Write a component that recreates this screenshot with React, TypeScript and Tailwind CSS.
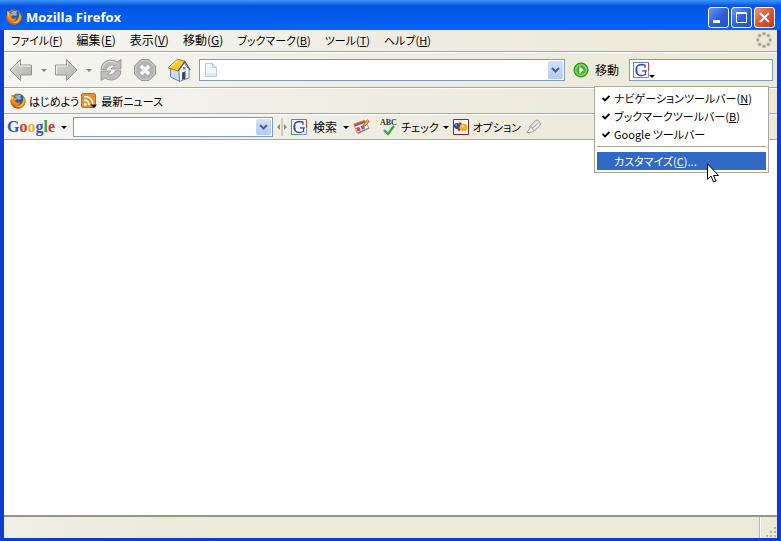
import { useState } from "react";
import type { ReactNode } from "react";

interface MenuLabel {
  text: string;
  accessKey: string;
  size: string;
}

// kanji labels are set one step larger than the compact kana ones
const MENUS: MenuLabel[] = [
  { text: "ファイル", accessKey: "F", size: "text-[11px]" },
  { text: "編集", accessKey: "E", size: "text-xs" },
  { text: "表示", accessKey: "V", size: "text-xs" },
  { text: "移動", accessKey: "G", size: "text-xs" },
  { text: "ブックマーク", accessKey: "B", size: "text-[11px]" },
  { text: "ツール", accessKey: "T", size: "text-[11px]" },
  { text: "ヘルプ", accessKey: "H", size: "text-[11px]" },
];

const TOOLBARS = [
  { id: "nav", text: "ナビゲーションツールバー", accessKey: "N" },
  { id: "bookmarks", text: "ブックマークツールバー", accessKey: "B" },
  { id: "google", text: "Google ツールバー", accessKey: "" },
];

const AccessKey = ({ letter }: { letter: string }) => (
  <>
    (<u className="underline-offset-1">{letter}</u>)
  </>
);

const Caret = ({ className = "text-black" }: { className?: string }) => (
  <svg viewBox="0 0 6 3" className={`h-[3px] w-[6px] shrink-0 ${className}`}>
    <path d="M0 0h6L3 3z" fill="currentColor" />
  </svg>
);

const FirefoxIcon = () => (
  <svg viewBox="0 0 16 16" className="h-4 w-4 shrink-0">
    <circle cx="8" cy="8" r="7.5" fill="#e8751a" />
    <path d="M2 4 1 1.5 4.5 3Q8 .2 12 2.2 16 5 15.5 9.5 14 15 8.5 15.7 2.5 15.5.6 10 .2 6.500 2 4z" fill="#e36a12" />
    <circle cx="8.600" cy="6.200" r="5.300" fill="#2c5c9c" />
    <path d="M5 3.200Q8 .8 11.500 2.400L10 4l1.500 1.500L9 7 6.500 5.500z" fill="#7db4df" />
    <path d="M13.200 3.500Q16.500 8.500 13 12.500 9 15.800 5 13.200 9.500 14 11.800 10.500 13.800 7.500 13.200 3.500z" fill="#f9ae2b" />
    <path d="M1.500 2 3.600 4.200 6.500 4.800 7.200 6.600 5 7.800Q5.200 10 8.200 9.800L10.500 9Q9.500 12.300 5.800 12 1.800 11 1.200 6.800z" fill="#f38a1c" />
    <path d="M1.500 2 3.200 4.600 2.200 8 1.500 6z" fill="#fbd04a" />
    <path d="M2 11.500Q5 15.200 10 14.800 5.500 16.800 2 11.500z" fill="#a83208" />
  </svg>
);

const ArrowIcon = ({ flip = false }: { flip?: boolean }) => (
  <svg viewBox="0 0 24 24" className="h-6 w-6">
    <defs>
      <linearGradient id="arrowFill" x1="0" y1="0" x2="1" y2="1">
        <stop offset="0" stopColor="#dcdcda" />
        <stop offset="1" stopColor="#aeaeac" />
      </linearGradient>
    </defs>
    <path
      d={flip ? "M23 12 12.500 1.500V7H1.500v10h11v5.500z" : "M1 12 11.500 1.500V7h11v10h-11v5.500z"}
      fill="url(#arrowFill)"
      stroke="#959593"
      strokeLinejoin="round"
    />
    <path
      d={flip ? "M2.500 16V8h11V4" : "M2.500 12 10.500 4v4h11"}
      fill="none"
      stroke="#ecece9"
    />
  </svg>
);

const ReloadIcon = () => (
  <svg viewBox="0 0 24 24" className="h-6 w-6">
    <g fill="#bdbdbb" stroke="#969694" strokeWidth=".9" strokeLinejoin="round">
      <path d="M2 11.500Q2.500 3 11 2q4.500-.3 7 2l4-2.500v9.500h-10l3.500-3Q13 6 10.500 7.500 8 9 7.500 11.500z" />
      <path d="M22 12.800Q21.500 21 13 22q-4.500.3-7-2l-4 2.500V13h10l-3.500 3q2.500 2 5 .5 2.500-1.500 3-3.700z" />
    </g>
    <path d="M3.500 10.500Q4.500 4 11 3.300q4-.2 6.500 2" fill="none" stroke="#dededc" />
  </svg>
);

const StopIcon = () => (
  <svg viewBox="0 0 24 24" className="h-6 w-6">
    <path d="M8 1.500h8L22.500 8v8L16 22.500H8L1.500 16V8z" fill="#b4b4b2" stroke="#969694" />
    <path d="M8.500 2.700h7L21.300 8.500v7l-5.800 5.800h-7l-5.800-5.800v-7z" fill="none" stroke="#cfcfcd" />
    <path d="m8 8 8 8m0-8-8 8" stroke="#fff" strokeWidth="3.400" />
  </svg>
);

const HomeIcon = () => (
  <svg viewBox="0 0 24 24" className="h-6 w-6">
    <path d="M3.500 10v9l9 4.300V12z" fill="#cfdaec" stroke="#7085ab" />
    <path d="M12 12.500 17 5l5 6.500V20l-9.500 3.300z" fill="#fafbfe" stroke="#7085ab" />
    <path d="M15 14.500 18.500 13.300v7.400L15 22z" fill="#3b4a68" />
    <path d="M16 9h2.500v2.500H16z" fill="#6f86b3" />
    <path d="M10.500 1.200 18 3.300 11 13 1 9.800z" fill="#f4cb35" stroke="#a27b17" strokeLinejoin="round" />
    <path d="M10.800 2.500 3.200 9" stroke="#ffec9b" strokeWidth="1.200" />
    <path d="m11 13 6.800-9.500 5.500 8.500" fill="none" stroke="#4d5566" strokeWidth="1.200" />
  </svg>
);

const PageIcon = () => (
  <svg viewBox="0 0 12 14" className="h-[14px] w-3">
    <path d="M.5.5h7l4 4v9H.5z" fill="#f4f8fe" stroke="#b9c9e6" />
    <path d="M2 10h9v3H2z" fill="#dce7f8" />
    <path d="M7.500.5v4h4" fill="#dce6f6" stroke="#b9c9e6" />
  </svg>
);

const GoIcon = () => (
  <svg viewBox="0 0 16 16" className="h-4 w-4">
    <circle cx="8" cy="8" r="7" fill="#47b52b" stroke="#278613" />
    <circle cx="8" cy="8" r="5.300" fill="none" stroke="#83dc62" strokeWidth="1.500" />
    <path d="M6 3.800 11.500 8 6 12.200z" fill="#fff" stroke="#2f981b" strokeWidth=".6" />
  </svg>
);

const GoogleG = () => (
  <svg viewBox="0 0 16 16" className="h-4 w-4 shrink-0">
    <path d="M0 0h16v16H0z" fill="#fff" />
    <path d="M.5 15.500V.5h15" fill="none" stroke="#5f7fd6" />
    <path d="M15.500.5v9" stroke="#c9453b" />
    <path d="M.5 5v10.500H10" fill="none" stroke="#4da557" />
    <path d="M10 15.500h5.500v-6" fill="none" stroke="#8797cf" />
    <path
      d="M12 5.800V3.200Q10 2.500 8.500 2.500 3 2.800 3 8t5.500 5.500q2 0 4-1V9h1M9 8.900h4.800"
      fill="none"
      stroke="#2c49b8"
      strokeWidth="1.300"
    />
    <path d="M4 5.500Q3 8 4.200 11" fill="none" stroke="#2c49b8" strokeWidth="1.300" />
  </svg>
);

const FeedIcon = () => (
  <svg viewBox="0 0 16 16" className="h-4 w-4">
    <rect x=".5" y=".5" width="14" height="14" rx="1.500" fill="#f08a24" stroke="#cf6c13" />
    <circle cx="4.200" cy="11.200" r="1.500" fill="#fff" />
    <path d="M3 7.200q5 0 5 5M3 3.500q9 0 9 9" fill="none" stroke="#fff" strokeWidth="1.700" />
    <path d="M9.500 11.500H16L12.800 15z" fill="#111" />
  </svg>
);

const HighlightIcon = () => (
  <svg viewBox="0 0 17 16" className="h-4 w-[17px]">
    <path d="m1 6 11-4 4.500 7.500L5 15z" fill="#77726c" />
    <path d="m.8 5 11-3.800 4 7.800L4 13.800z" fill="#fbf4ec" stroke="#a58d80" strokeWidth=".8" />
    <path d="m1 5.200 10.500-3.700 1 2.300L2 7.500z" fill="#d8432f" />
    <path d="m3 9 3.300-1.200 1.500 3.500-3.300 1.200z" fill="#cf4a37" />
    <path d="m7.500 7.300 3-1 1.500 3.200-3 1.200z" fill="#5a76b8" />
    <path d="m14.500.8-3.500 4-.7 3 2.500-1.500 3.500-4z" fill="#f2b93a" stroke="#a0552a" strokeWidth=".8" />
  </svg>
);

const CheckIcon = () => (
  <svg viewBox="0 0 17 17" className="h-[17px] w-[17px]">
    <text x="0" y="6" className="font-['Liberation_Serif',serif] text-[8px] font-bold" fill="#333">
      ABC
    </text>
    <path d="m4 11 4 4 6-8" fill="none" stroke="#35a94a" strokeWidth="2.400" />
  </svg>
);

const OptionsIcon = () => (
  <svg viewBox="0 0 16 16" className="h-4 w-4">
    <path d="M.5.5h15v15H.5z" fill="#fff" stroke="#9c1c24" />
    <circle cx="4" cy="7" r="3" fill="#274f9f" />
    <circle cx="7" cy="5" r="1.800" fill="#cf342a" />
    <circle cx="10.800" cy="8.500" r="3.700" fill="#eab21f" />
    <circle cx="9.800" cy="7.200" r="1.300" fill="#fbe584" />
    <circle cx="6" cy="10.500" r="1.500" fill="#c73127" />
    <circle cx="3.300" cy="6" r=".9" fill="#86aadf" />
  </svg>
);

const PenIcon = () => (
  <svg viewBox="0 0 17 16" className="h-4 w-[17px]">
    <path d="M10.500 1.500 12.500.8l3.200 3.500-.5 1.900L9.500 12 5 7.500z" fill="#dddbd3" stroke="#a5a39b" />
    <path d="m11.500 3.500-4.500 4.500M13.500 5.200 9 9.800" stroke="#fff" />
    <path d="m12.500 4.300-4.500 4.500" stroke="#a5a39b" />
    <path d="M5 7.500 4.500 10l-3 3.500h5l1-1.300 2-.2z" fill="#f5f4ee" stroke="#a5a39b" />
  </svg>
);

const Throbber = () => (
  <svg viewBox="0 0 16 16" className="h-4 w-4" fill="#aaa8a1">
    <circle cx="8" cy="1.800" r="1.800" />
    <circle cx="12.400" cy="3.600" r="1.800" />
    <circle cx="14.200" cy="8" r="1.800" />
    <circle cx="12.400" cy="12.400" r="1.800" />
    <circle cx="8" cy="14.200" r="1.800" />
    <circle cx="3.600" cy="12.400" r="1.800" />
    <circle cx="1.800" cy="8" r="1.800" />
    <circle cx="3.600" cy="3.600" r="1.800" />
  </svg>
);

const DropButton = ({ label }: { label: string }) => (
  <button
    aria-label={label}
    className="flex w-[15px] shrink-0 items-center justify-center self-stretch rounded-xs bg-gradient-to-b from-[#d3e0fd] to-[#b4c9f6]"
  >
    <svg viewBox="0 0 9 6" className="h-[6px] w-[9px]">
      <path d="m1 1 3.500 3.500L8 1" fill="none" stroke="#4d6185" strokeWidth="2" />
    </svg>
  </button>
);

const CaptionButton = ({ label, close = false, children }: { label: string; close?: boolean; children: ReactNode }) => (
  <button
    aria-label={label}
    className={`h-[21px] w-[21px] rounded-[3px] border border-white bg-gradient-to-br ${
      close ? "from-[#ee9272] via-[#dc5630] to-[#c03a12]" : "from-[#7297ee] via-[#2f61dc] to-[#2150cc]"
    }`}
  >
    <svg viewBox="0 0 19 19" className="h-[19px] w-[19px]" fill="none" stroke="#fff">
      {children}
    </svg>
  </button>
);

const ToolbarMenu = () => {
  const [visible, setVisible] = useState(["nav", "bookmarks", "google"]);

  const toggle = (id: string) =>
    setVisible(visible.includes(id) ? visible.filter((v) => v !== id) : [...visible, id]);

  return (
    <div
      role="menu"
      className="absolute top-[86px] right-3 z-10 w-[175px] border border-[#aca899] bg-white p-[2px]"
    >
      {TOOLBARS.map((bar) => (
        <button
          key={bar.id}
          role="menuitemcheckbox"
          aria-checked={visible.includes(bar.id)}
          onClick={() => toggle(bar.id)}
          className="flex h-[18px] w-full items-center"
        >
          <span className="flex w-[17px] shrink-0 justify-center">
            {visible.includes(bar.id) && (
              <svg viewBox="0 0 8 7" className="h-[7px] w-2">
                <path d="M.5 3 3 5.500 7.500 1" fill="none" stroke="#000" strokeWidth="1.900" />
              </svg>
            )}
          </span>
          <span>
            {bar.text}
            {bar.accessKey && <AccessKey letter={bar.accessKey} />}
          </span>
        </button>
      ))}
      <hr className="mt-[3px] mb-[5px] border-[#aca899]" />
      <button
        role="menuitem"
        className="flex h-[18px] w-full items-center bg-[#316ac5] pl-[17px] text-white"
      >
        <span>
          カスタマイズ
          <AccessKey letter="C" />
          ...
        </span>
      </button>
      <svg viewBox="0 0 12 20" className="pointer-events-none absolute top-[76px] left-[112px] h-5 w-3">
        <path d="M.5.8v15.500L4 13l2.500 6 2.500-1-2.500-5.500h5z" fill="#fff" stroke="#000" />
      </svg>
    </div>
  );
};

export default function App() {
  const [address, setAddress] = useState("");
  const [search, setSearch] = useState("");
  const [query, setQuery] = useState("");

  return (
    <div className="relative flex min-h-screen flex-col bg-[#0842d6] font-['Noto_Sans_CJK_JP',sans-serif] text-[11px] leading-4 whitespace-nowrap text-black [font-feature-settings:'palt']">
      {/* Title bar */}
      <header className="flex h-[30px] items-center gap-1 bg-gradient-to-b from-[#3d95ff] via-[#0453e0] via-20% to-[#0465fa] pt-1 pr-[6px] pl-[6px]">
        <FirefoxIcon />
        <h1 className="grow font-['Open_Sans',sans-serif] text-[13px] font-bold text-white">
          Mozilla Firefox
        </h1>
        <div className="flex gap-[2px]">
          <CaptionButton label="最小化">
            <path d="M4 13.500h7" strokeWidth="3" />
          </CaptionButton>
          <CaptionButton label="最大化">
            <path d="M4.500 4.500h10v10h-10zM4 5.500h11" />
          </CaptionButton>
          <CaptionButton label="閉じる" close>
            <path d="m5 5 9 9m0-9-9 9" strokeWidth="2" />
          </CaptionButton>
        </div>
      </header>

      <div className="flex grow flex-col border-x-4 border-b-[3px] border-[#0c3cd0]">
        <div className="bg-gradient-to-r from-[#f5f5f2] via-[#efede2] via-50% to-[#ece9d8]">
          {/* Menu bar */}
          <nav className="flex h-[22px] items-center border-b border-[#aca899] pr-[5px] pb-px pl-[7px]">
            <div className="flex grow items-baseline gap-[14px]">
              {MENUS.map((menu) => (
                <button key={menu.text} className={`leading-4 ${menu.size}`}>
                  {menu.text}
                  <AccessKey letter={menu.accessKey} />
                </button>
              ))}
            </div>
            <Throbber />
          </nav>

          {/* Navigation toolbar */}
          <div className="flex h-9 items-center border-t border-b border-t-white border-b-[#aca899] pr-1 pl-[5px]">
            <button aria-label="戻る"><ArrowIcon /></button>
            <button aria-label="戻る履歴" className="flex w-[21px] justify-center"><Caret className="text-[#85847d]" /></button>
            <button aria-label="進む"><ArrowIcon flip /></button>
            <button aria-label="進む履歴" className="flex w-[21px] justify-center"><Caret className="text-[#85847d]" /></button>
            <div className="flex gap-[10px]">
              <button aria-label="更新"><ReloadIcon /></button>
              <button aria-label="中止"><StopIcon /></button>
              <button aria-label="ホーム"><HomeIcon /></button>
            </div>
            <div className="ml-2 flex h-[22px] grow items-center border border-[#7f9db9] bg-white p-px pl-[5px]">
              <PageIcon />
              <input
                aria-label="アドレス"
                value={address}
                onChange={(e) => setAddress(e.target.value)}
                className="min-w-0 grow px-1 outline-none"
              />
              <DropButton label="アドレスの履歴" />
            </div>
            <button className="ml-2 flex items-center gap-[6px] text-xs">
              <GoIcon />
              移動
            </button>
            <div className="ml-[10px] flex h-[22px] w-[144px] items-center border border-[#7f9db9] bg-white pl-[3px]">
              <button aria-label="検索エンジン" className="flex items-end">
                <GoogleG />
                <Caret />
              </button>
              <input
                aria-label="ウェブ検索"
                value={search}
                onChange={(e) => setSearch(e.target.value)}
                className="min-w-0 grow px-1 outline-none"
              />
            </div>
          </div>

          {/* Bookmarks toolbar */}
          <div className="flex h-[26px] items-center gap-[2px] border-t border-b border-t-white border-b-[#aca899] pl-[6px]">
            <button className="flex items-center gap-[3px]">
              <FirefoxIcon />
              はじめよう
            </button>
            <button className="flex items-center gap-1">
              <FeedIcon />
              最新ニュース
            </button>
          </div>

          {/* Google toolbar */}
          <div className="flex h-[26px] items-center border-t border-b border-t-white border-b-[#aca899] pl-[3px]">
            <button className="flex items-center gap-[6px]">
              <span className="font-['Liberation_Serif',serif] text-base leading-5 font-bold">
                <span className="text-[#3156c4]">G</span>
                <span className="text-[#d0392e]">o</span>
                <span className="text-[#e6b422]">o</span>
                <span className="text-[#3156c4]">g</span>
                <span className="text-[#3a9c45]">l</span>
                <span className="text-[#d0392e]">e</span>
              </span>
              <Caret />
            </button>
            <div className="ml-[6px] flex h-5 w-[200px] items-center border border-[#7f9db9] bg-white p-px">
              <input
                aria-label="Google 検索"
                value={query}
                onChange={(e) => setQuery(e.target.value)}
                className="min-w-0 grow px-1 outline-none"
              />
              <DropButton label="検索の履歴" />
            </div>
            <svg viewBox="0 0 10 18" className="mx-1 h-[18px] w-[10px]">
              <path d="M5 0v18" stroke="#aca899" />
              <path d="M0 9l3-3v6zM10 9 7 6v6z" fill="#8f8d84" />
            </svg>
            <button className="flex items-center gap-[6px] text-xs">
              <GoogleG />
              検索
              <Caret />
            </button>
            <button aria-label="ハイライト" className="ml-1"><HighlightIcon /></button>
            <button className="ml-[10px] flex items-center gap-1">
              <CheckIcon />
              チェック
              <Caret />
            </button>
            <button className="ml-1 flex items-center gap-1">
              <OptionsIcon />
              オプション
            </button>
            <button aria-label="ペン" className="ml-1"><PenIcon /></button>
          </div>
        </div>

        <main className="grow bg-white" />

        {/* Status bar */}
        <footer className="flex h-[23px] items-stretch justify-end border-t-2 border-[#97958a] bg-gradient-to-r from-[#f0efe7] via-[#ece9d8] via-30% to-[#ece9d8]">
          <div className="flex w-[18px] items-end justify-end border-l border-[#b9b6a5] shadow-[inset_1px_0_#fff]">
            <svg viewBox="0 0 12 12" className="h-3 w-3" fill="#b8b4a3">
              <path d="M9 1h2v2H9zM9 5h2v2H9zM5 5h2v2H5zM9 9h2v2H9zM5 9h2v2H5zM1 9h2v2H1z" />
            </svg>
          </div>
        </footer>
      </div>

      <ToolbarMenu />
    </div>
  );
}
